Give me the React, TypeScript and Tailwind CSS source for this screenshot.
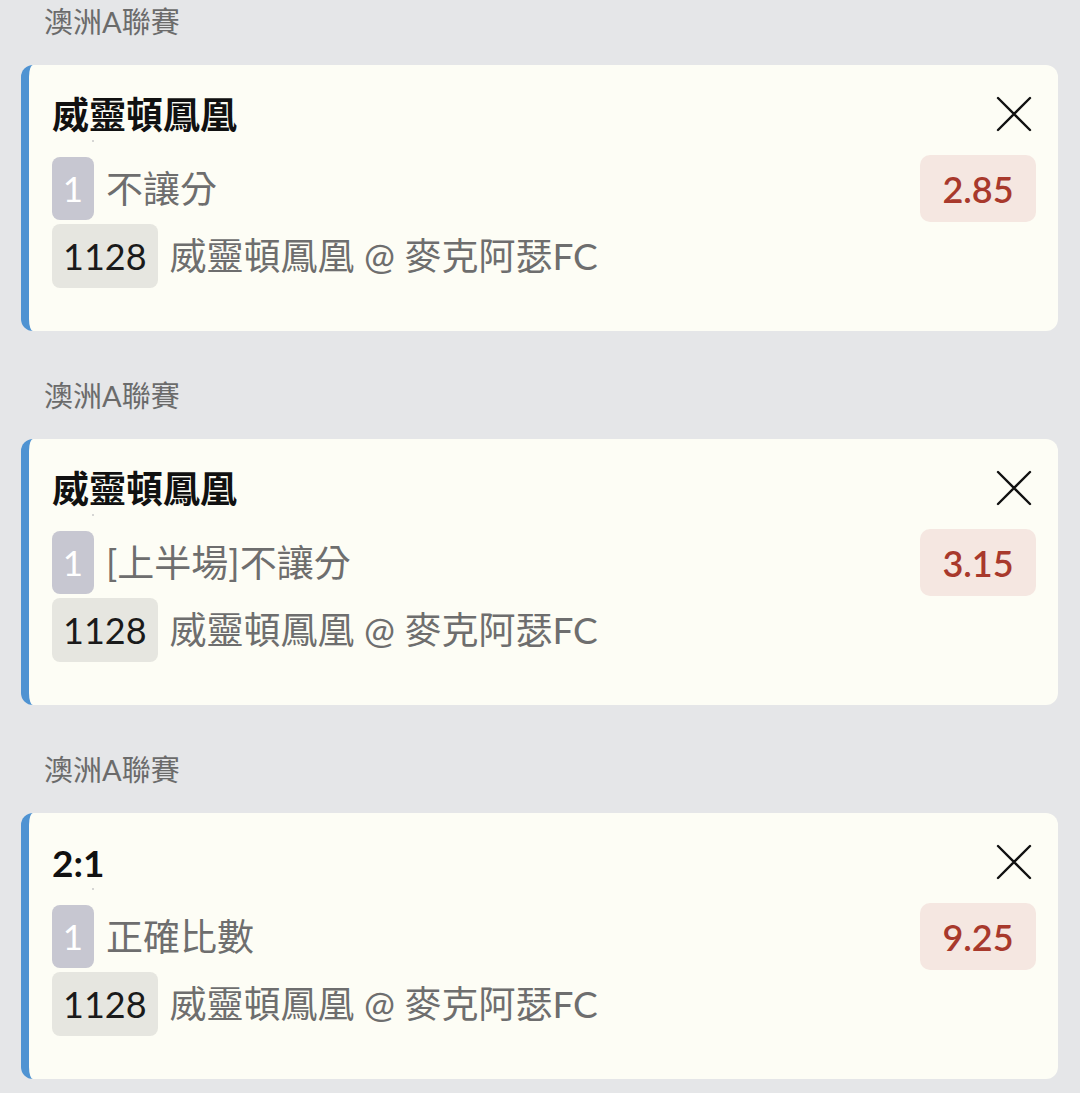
import React from "react";

interface Bet {
  league: string;
  selection: string;
  market: string;
  odds: string;
  matchNo: string;
  match: string;
}

const bets: Bet[] = [
  { league: "澳洲A聯賽", selection: "威靈頓鳳凰", market: "不讓分", odds: "2.85", matchNo: "1128", match: "威靈頓鳳凰 @ 麥克阿瑟FC" },
  { league: "澳洲A聯賽", selection: "威靈頓鳳凰", market: "[上半場]不讓分", odds: "3.15", matchNo: "1128", match: "威靈頓鳳凰 @ 麥克阿瑟FC" },
  { league: "澳洲A聯賽", selection: "2:1", market: "正確比數", odds: "9.25", matchNo: "1128", match: "威靈頓鳳凰 @ 麥克阿瑟FC" },
];

const CloseIcon = () => (
  <svg width="36" height="36" viewBox="0 0 36 36" fill="none" stroke="#111" strokeWidth="2.4" strokeLinecap="round">
    <path d="M2 2 L34 34 M34 2 L2 34" />
  </svg>
);

const BetCard = ({ bet }: { bet: Bet }) => (
  <section className="flex flex-col">
    {/* league label */}
    <div className="h-[44px] flex items-center pl-[44px] text-[29px] text-[#6b6b6b]">{bet.league}</div>
    <div className="mt-[21px] ml-[21px] mr-[22px] h-[266px] bg-[#fdfdf5] rounded-[12px] border-l-[8px] border-[#4f93d2] pl-[23px] pr-[22px] pt-[24px] flex flex-col">
      <div className="h-[50px] flex items-center justify-between">
        <span className="text-[37px] font-bold text-[#111] leading-none">{bet.selection}</span>
        <span className="mr-[4px]">
          <CloseIcon />
        </span>
      </div>
      <div className="relative">
        <span className="absolute left-[40px] top-[1px] w-[2px] h-[2px] rounded-full bg-[#c8c8c8]" />
      </div>
      <div className="mt-[18px] h-[63px] flex items-center justify-between">
        <div className="flex items-center gap-[12px]">
          <span className="h-[63px] w-[42px] rounded-[8px] bg-[#c7c7d1] text-white text-[35px] flex items-center justify-center">1</span>
          <span className="text-[37px] text-[#6e6e6e]">{bet.market}</span>
        </div>
        <span className="h-[67px] w-[116px] rounded-[10px] bg-[#f5e7e1] text-[#a8392c] text-[36px] font-semibold flex items-center justify-center">
          {bet.odds}
        </span>
      </div>
      <div className="mt-[4px] h-[64px] flex items-center gap-[12px]">
        <span className="h-[64px] px-[11px] rounded-[8px] bg-[#e6e6e0] text-[#1a1a1a] text-[36px] flex items-center">{bet.matchNo}</span>
        <span className="text-[37px] text-[#6e6e6e]">{bet.match}</span>
      </div>
    </div>
  </section>
);

export default function App() {
  return (
    <div
      className="w-[1080px] h-[1093px] bg-[#e5e6e8] flex flex-col gap-[43px] overflow-hidden"
      style={{ fontFamily: "Lato, 'Noto Sans CJK TC', sans-serif" }}
    >
      {bets.map((b, i) => (
        <BetCard key={i} bet={b} />
      ))}
    </div>
  );
}
